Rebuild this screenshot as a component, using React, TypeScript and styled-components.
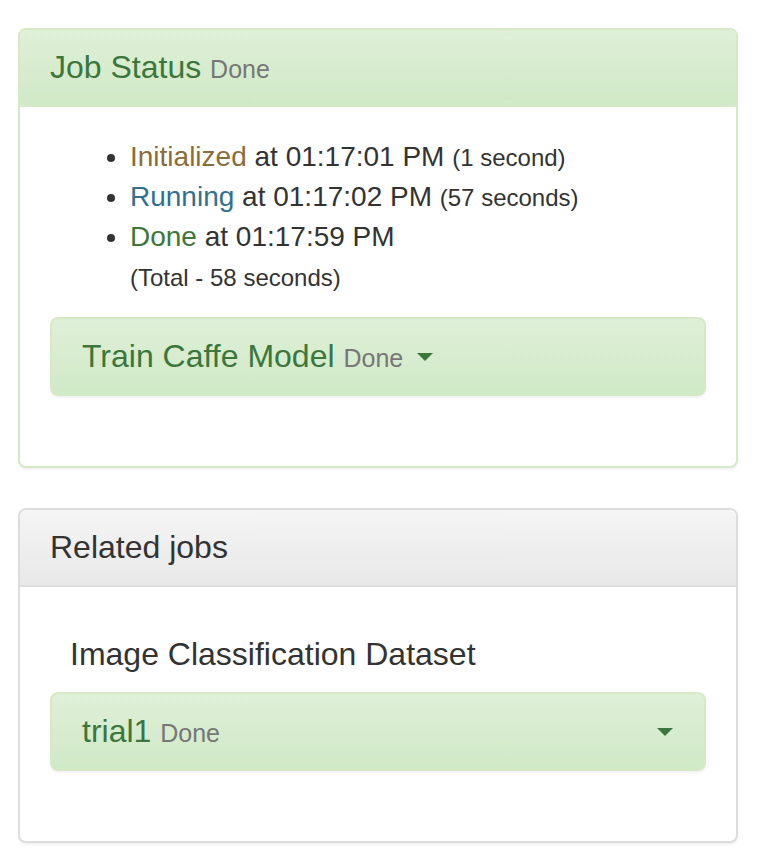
import React from "react";
import styled, { createGlobalStyle } from "styled-components";

const Global = createGlobalStyle`
  html, body { margin: 0; padding: 0; background: #fff; }
  body {
    font-family: "Liberation Sans", Arial, Helvetica, sans-serif;
    font-size: 28px;
    line-height: 40px;
    color: #333;
  }
  * { box-sizing: border-box; }
`;

const Page = styled.div`
  padding: 28px 24px 0 18px;
`;

const Panel = styled.section<{ $variant: "success" | "default" }>`
  border: 2px solid ${(p) => (p.$variant === "success" ? "#d6e9c6" : "#dddddd")};
  border-radius: 8px;
  background: #fff;
  box-shadow: 0 2px 2px rgba(0, 0, 0, 0.05);
  margin-bottom: 40px;
  overflow: hidden;
`;

const PanelHeading = styled.div<{ $variant: "success" | "default" }>`
  padding: 20px 30px 20px;
  border-bottom: 2px solid ${(p) => (p.$variant === "success" ? "#d6e9c6" : "#dddddd")};
  color: ${(p) => (p.$variant === "success" ? "#3c763d" : "#333")};
  background-image: ${(p) =>
    p.$variant === "success"
      ? "linear-gradient(to bottom, #dff0d8 0%, #d0e9c6 100%)"
      : "linear-gradient(to bottom, #f5f5f5 0%, #e8e8e8 100%)"};
`;

const PanelTitle = styled.h3`
  margin: 0;
  font-size: 32px;
  line-height: 35px;
  font-weight: 500;
`;

const Small = styled.small`
  font-size: 25px;
  line-height: 1;
  color: #777;
  font-weight: 400;
`;

const PanelBody = styled.div`
  padding: 30px;
`;

const StatusList = styled.ul`
  margin: 0 0 20px;
  padding-left: 80px;
`;

const StatusItem = styled.li`
  line-height: 40px;
`;

const State = styled.span<{ $tone: "warning" | "info" | "success" }>`
  color: ${(p) =>
    p.$tone === "warning" ? "#8a6d3b" : p.$tone === "info" ? "#31708f" : "#3c763d"};
`;

const Note = styled.small`
  font-size: 24px;
  line-height: 1;
`;

const JobBox = styled.div`
  display: flex;
  align-items: center;
  padding: 20px 30px 20px;
  border: 2px solid #d6e9c6;
  border-radius: 8px;
  color: #3c763d;
  background-image: linear-gradient(to bottom, #dff0d8 0%, #d0e9c6 100%);
  box-shadow: 0 2px 2px rgba(0, 0, 0, 0.05);
  margin-bottom: 40px;
`;

const JobTitle = styled.span`
  font-size: 32px;
  line-height: 35px;
`;

const Caret = styled.span<{ $right?: boolean }>`
  display: inline-block;
  width: 0;
  height: 0;
  margin-left: ${(p) => (p.$right ? "auto" : "14px")};
  margin-right: ${(p) => (p.$right ? "1px" : "0")};
  border-top: 8px solid #3c763d;
  border-left: 8px solid transparent;
  border-right: 8px solid transparent;
`;

const GroupTitle = styled.h4`
  margin: 20px 0 20px 20px;
  font-size: 32px;
  line-height: 35px;
  font-weight: 500;
  color: #333;
`;

export default function App() {
  return (
    <>
      <Global />
      <Page>
        <Panel $variant="success">
          <PanelHeading $variant="success">
            <PanelTitle>
              Job Status <Small>Done</Small>
            </PanelTitle>
          </PanelHeading>
          <PanelBody>
            <StatusList>
              <StatusItem>
                <State $tone="warning">Initialized</State> at 01:17:01 PM <Note>(1 second)</Note>
              </StatusItem>
              <StatusItem>
                <State $tone="info">Running</State> at 01:17:02 PM <Note>(57 seconds)</Note>
              </StatusItem>
              <StatusItem>
                <State $tone="success">Done</State> at 01:17:59 PM
                <br />
                <Note>(Total - 58 seconds)</Note>
              </StatusItem>
            </StatusList>
            <JobBox>
              <JobTitle>
                Train Caffe Model <Small>Done</Small>
              </JobTitle>
              <Caret />
            </JobBox>
          </PanelBody>
        </Panel>

        <Panel $variant="default">
          <PanelHeading $variant="default">
            <PanelTitle>Related jobs</PanelTitle>
          </PanelHeading>
          <PanelBody>
            <GroupTitle>Image Classification Dataset</GroupTitle>
            <JobBox>
              <JobTitle>
                trial1 <Small>Done</Small>
              </JobTitle>
              <Caret $right />
            </JobBox>
          </PanelBody>
        </Panel>
      </Page>
    </>
  );
}
